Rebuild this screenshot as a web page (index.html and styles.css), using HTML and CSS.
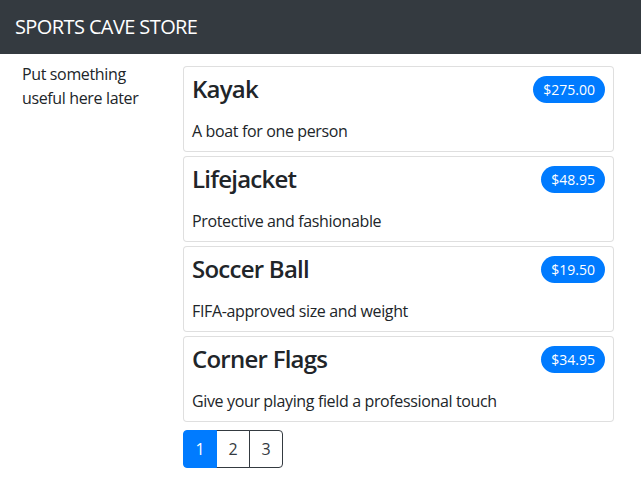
FILE: index.html
```html
<!DOCTYPE html>
<html lang="en">
<head>
<meta charset="utf-8">
<title>Sports Cave Store</title>
<link rel="stylesheet" href="styles.css">
</head>
<body>
<header class="navbar">
  <span class="brand">SPORTS CAVE STORE</span>
</header>
<div class="layout">
  <aside class="sidebar">Put something useful here later</aside>
  <main class="main">
    <div class="card">
      <div class="card-head">
        <h4 class="card-title">Kayak</h4>
        <span class="badge">$275.00</span>
      </div>
      <div class="card-text">A boat for one person</div>
    </div>
    <div class="card">
      <div class="card-head">
        <h4 class="card-title">Lifejacket</h4>
        <span class="badge">$48.95</span>
      </div>
      <div class="card-text">Protective and fashionable</div>
    </div>
    <div class="card">
      <div class="card-head">
        <h4 class="card-title">Soccer Ball</h4>
        <span class="badge">$19.50</span>
      </div>
      <div class="card-text">FIFA-approved size and weight</div>
    </div>
    <div class="card">
      <div class="card-head">
        <h4 class="card-title">Corner Flags</h4>
        <span class="badge">$34.95</span>
      </div>
      <div class="card-text">Give your playing field a professional touch</div>
    </div>
    <div class="btn-group">
      <button class="btn btn-active">1</button>
      <button class="btn">2</button>
      <button class="btn">3</button>
    </div>
  </main>
</div>
</body>
</html>
```
FILE: styles.css
```css
* { box-sizing: border-box; }
html, body {
  margin: 0;
  padding: 0;
  background: #fff;
}
body {
  font-family: "Open Sans", "Noto Sans", sans-serif;
  font-size: 16px;
  line-height: 24px;
  color: #212529;
  letter-spacing: -0.36px;
}
.navbar {
  height: 54px;
  background: #343a40;
  display: flex;
  align-items: center;
  padding-left: 15px;
}
.brand {
  color: #fff;
  font-size: 20px;
  line-height: 30px;
  letter-spacing: -0.6px;
}
.layout {
  display: grid;
  grid-template-columns: 183px 1fr;
}
.sidebar {
  padding: 8px 22px 8px 22px;
}
.main {
  padding: 12px 27px 8px 0;
  display: flex;
  flex-direction: column;
  align-items: flex-start;
}
.card {
  width: 100%;
  height: 86px;
  margin-bottom: 4px;
  border: 1px solid rgba(0, 0, 0, 0.125);
  border-radius: 4px;
  padding: 8px 8px 0 8px;
  background: #fff;
}
.card-head {
  height: 28px;
  display: flex;
  align-items: center;
  justify-content: space-between;
}
.card-title {
  margin: 0;
  font-size: 24px;
  line-height: 28.8px;
  font-weight: 600;
  letter-spacing: -0.75px;
}
.badge {
  display: inline-block;
  background: #007bff;
  color: #fff;
  font-size: 14px;
  line-height: 15px;
  padding: 6px 10px;
  border-radius: 14px;
  letter-spacing: 0;
}
.card-text {
  margin-top: 16px;
}
.btn-group {
  display: flex;
  margin-top: 4px;
}
.btn {
  width: 34px;
  height: 38px;
  padding: 0;
  font-family: inherit;
  font-size: 16px;
  line-height: 24px;
  letter-spacing: 0;
  color: #343a40;
  background: #fff;
  border: 1px solid #343a40;
  border-radius: 0;
  margin-left: -1px;
}
.btn:first-child {
  margin-left: 0;
  border-radius: 4px 0 0 4px;
}
.btn:last-child {
  border-radius: 0 4px 4px 0;
}
.btn-active {
  background: #007bff;
  border-color: #007bff;
  color: #fff;
  position: relative;
  z-index: 1;
}
```
